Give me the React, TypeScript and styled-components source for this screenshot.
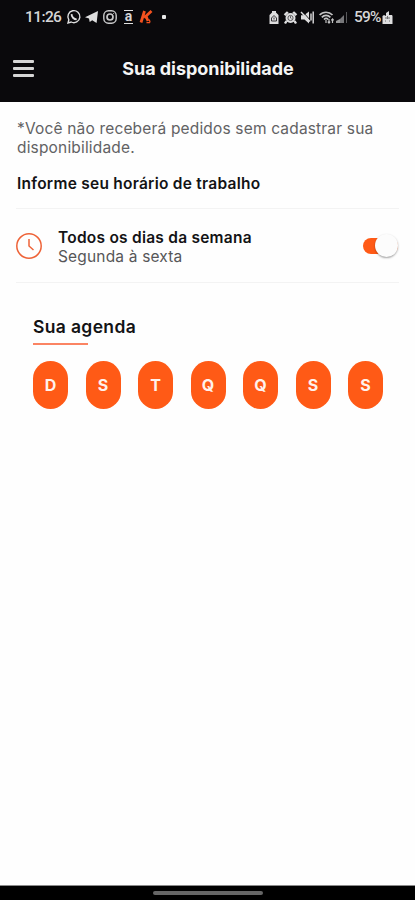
import React from "react";
import styled, { createGlobalStyle } from "styled-components";

const GlobalStyle = createGlobalStyle`
  * { box-sizing: border-box; }
  html, body { margin: 0; padding: 0; background: #fefefe; }
  body { overflow: hidden; }
`;

const Screen = styled.div`
  display: flex;
  flex-direction: column;
  width: 415px;
  height: 900px;
  background: #fefefe;
  font-family: Inter, "Liberation Sans", sans-serif;
  color: #131315;
`;

const TopArea = styled.div`
  flex: none;
  height: 102px;
  background: #0a090c;
`;

const StatusBar = styled.div`
  display: flex;
  align-items: center;
  justify-content: space-between;
  height: 34px;
  padding: 0 22px 0 25px;
  font-family: Roboto, sans-serif;
  color: #d6d6d7;
`;

const StatusGroup = styled.div`
  display: flex;
  align-items: center;
`;

const StatusText = styled.span<{ $width: number; $spacing: number; $gap?: number }>`
  width: ${(p) => p.$width}px;
  margin-left: ${(p) => p.$gap ?? 0}px;
  font-size: 15.5px;
  font-weight: 500;
  letter-spacing: ${(p) => p.$spacing}px;
  line-height: 20px;
  white-space: nowrap;
`;

const Glyph = styled.svg<{ $gap: number }>`
  display: block;
  flex: none;
  margin-left: ${(p) => p.$gap}px;
  overflow: visible;
`;

const StoreBadge = styled.span`
  display: flex;
  align-items: center;
  justify-content: center;
  width: 9px;
  height: 14px;
  margin-left: 7px;
  padding-bottom: 2px;
  border-top: 1.5px solid #dededf;
  border-bottom: 1.5px solid #dededf;
  font-size: 14px;
  font-weight: 700;
  line-height: 9px;
`;

const Dot = styled.span`
  width: 4px;
  height: 4px;
  margin-left: 9px;
  border-radius: 1px;
  background: #e8e8e8;
`;

const AppBar = styled.header`
  display: grid;
  grid-template-columns: 35px 1fr 35px;
  align-items: center;
  height: 68px;
  padding: 0 12px 0 13px;
`;

const MenuButton = styled.button`
  display: flex;
  flex-direction: column;
  gap: 4px;
  width: 21px;
  padding: 0;
  border: 0;
  background: none;
`;

const MenuLine = styled.span`
  height: 3px;
  border-radius: 1px;
  background: #d6d6d6;
`;

const Title = styled.h1`
  margin: 0;
  padding-top: 1px;
  font-size: 18px;
  font-weight: 700;
  line-height: 24px;
  letter-spacing: -0.05px;
  color: #f5f5f5;
  text-align: center;
  white-space: nowrap;
`;

const Content = styled.main`
  flex: 1;
  padding: 17px 16px 0;
`;

const Notice = styled.p`
  margin: 0 0 0 1px;
  font-size: 15.5px;
  line-height: 19px;
  letter-spacing: 0.17px;
  color: #626264;
  white-space: nowrap;
`;

const Prompt = styled.h2`
  margin: 17px 0 0 1px;
  font-size: 15.5px;
  font-weight: 600;
  line-height: 20px;
  letter-spacing: 0.25px;
  white-space: nowrap;
`;

const ScheduleRow = styled.section`
  display: flex;
  align-items: center;
  height: 75px;
  margin-top: 14px;
  border-top: 1px solid #f3f3f3;
  border-bottom: 1px solid #f3f3f3;
`;

const ScheduleText = styled.div`
  flex: 1;
  margin-left: 16px;
  padding-top: 3px;
`;

const ScheduleName = styled.div`
  font-size: 15.5px;
  font-weight: 600;
  line-height: 19px;
  letter-spacing: 0.24px;
`;

const ScheduleDays = styled.div`
  font-size: 15.5px;
  line-height: 20px;
  letter-spacing: 0.17px;
  color: #565658;
`;

const Toggle = styled.button`
  display: flex;
  align-items: center;
  justify-content: flex-end;
  width: 35px;
  height: 16px;
  margin-right: 1px;
  padding: 0;
  border: 0;
  border-radius: 8px;
  background: #ff5a16;
`;

const Knob = styled.span`
  flex: none;
  width: 23px;
  height: 23px;
  border-radius: 50%;
  background: #fcfcfc;
  box-shadow: 0 1px 2px rgba(0, 0, 0, 0.34);
`;

const Agenda = styled.section`
  padding: 33px 16px 0 17px;
`;

const AgendaTitle = styled.h2`
  width: 120px;
  margin: 0;
  font-size: 17.5px;
  font-weight: 600;
  line-height: 22px;
  letter-spacing: 0.35px;
  white-space: nowrap;
`;

const Underline = styled.div`
  width: 55px;
  height: 2px;
  margin-top: 5px;
  background: #fb8463;
`;

const Days = styled.div`
  display: flex;
  justify-content: space-between;
  margin-top: 16px;
`;

const Day = styled.button`
  width: 35px;
  height: 48px;
  padding: 0;
  border: 0;
  border-radius: 17.5px;
  background: #ff5a16;
  color: #fff2ec;
  font-family: inherit;
  font-size: 16px;
  font-weight: 700;
`;

const NavigationBar = styled.footer`
  flex: none;
  display: flex;
  justify-content: center;
  height: 15px;
  padding-top: 5px;
  border-top: 1px solid #8a8a8a;
  background: #000;
`;

const HomeHandle = styled.div`
  width: 110px;
  height: 4px;
  border-radius: 2px;
  background: #666;
`;

const ink = "#dededf";
const days = ["D", "S", "T", "Q", "Q", "S", "S"];

function Notifications() {
  return (
    <StatusGroup>
      <StatusText $width={42} $spacing={-0.6}>11:26</StatusText>
      <Glyph $gap={0} width="14" height="14" viewBox="0 0 14 14" fill="none" stroke={ink}>
        <path d="M1 13l.8-3.2A6 6 0 1 1 4.2 12z" strokeWidth="1.4" />
        <path d="M4.7 4.2c-.4 2.6 2.2 5.2 5 5.2" strokeWidth="1.9" />
      </Glyph>
      <Glyph $gap={4} width="13" height="12" viewBox="0 0 13 12">
        <path d="M0 6.2L13 0l-1.4 12-4.4-2.8L4.7 11 4 7.5z" fill={ink} />
      </Glyph>
      <Glyph $gap={5} width="14" height="14" viewBox="0 0 14 14" fill="none" stroke="#c9c9ca">
        <rect x=".8" y=".8" width="12.4" height="12.4" rx="4.6" strokeWidth="1.4" />
        <circle cx="7" cy="7" r="3" strokeWidth="1.7" />
        <circle cx="10.7" cy="3.4" r=".5" fill={ink} stroke="none" />
      </Glyph>
      <StoreBadge>a</StoreBadge>
      <Glyph $gap={7} width="13" height="14" viewBox="0 0 13 14" fill="none" stroke="#f4511e">
        <path d="M4.5 1L1 12.5M11.5 1L4.2 7.8M6 6l2 5" strokeWidth="2.8" />
        <path d="M6.5 12.7h3.5M9.3 9.5l.8 3" strokeWidth="1.2" />
      </Glyph>
      <Dot />
    </StatusGroup>
  );
}

function SystemIcons() {
  return (
    <StatusGroup>
      <Glyph $gap={0} width="10" height="13" viewBox="0 0 10 13">
        <path d="M3 0h4v1.5L9.5 4v9H.5V4L3 1.5z" fill={ink} />
        <path d="M5 4.5L2.5 7v3h5V7zM5 6.5v2" fill="none" stroke="#343336" />
      </Glyph>
      <Glyph $gap={5} width="13" height="13" viewBox="0 0 13 13" fill="none">
        <path d="M.6 4.2L3.8 1M12.4 4.2L9.2 1M2.5 10L1 12.5M10.5 10l1.5 2.5" stroke={ink} strokeWidth="2.4" />
        <circle cx="6.5" cy="7" r="5" fill={ink} />
        <circle cx="6.5" cy="7" r="2.6" stroke="#58575a" />
        <path d="M6.5 5.2V7l1 .8" stroke="#58575a" />
      </Glyph>
      <Glyph $gap={4} width="13" height="13" viewBox="0 0 13 13" fill="none">
        <path d="M0 4.2h3L8 .5v12L3.5 8.5H0z" fill={ink} />
        <path d="M1.5.5l8 9" stroke="#0a090c" />
        <path d="M0 1l9 9.5M10 2.5v7M12.2.5v12" stroke={ink} strokeWidth="1.4" />
      </Glyph>
      <Glyph $gap={5} width="16" height="13" viewBox="0 0 16 13" fill="none" stroke="#c4c4c5">
        <path d="M.6 4C4 .3 10 .3 13.5 4M2.8 6.3c2.5-2.6 6-2.6 8.6 0M5 8.5c1.2-1.2 3-1.2 4.3 0" strokeWidth="1.7" />
        <path d="M7 9v3M10 8v4M8.8 10.6L10 12l1.2-1.4M13.5 12V8M12.3 9.4L13.5 8l1.2 1.4" strokeWidth="1.2" />
      </Glyph>
      <Glyph $gap={1} width="13" height="12" viewBox="0 0 13 12">
        <path d="M0 12v-2l4-2v4z" fill="#99999b" />
        <path d="M4 12V8l4-4v8z" fill="#77777a" />
        <path d="M10.5 1v11" stroke="#59595c" />
      </Glyph>
      <StatusText $width={28} $spacing={-0.8} $gap={5}>59%</StatusText>
      <Glyph $gap={0} width="11" height="13" viewBox="0 0 11 13">
        <path d="M.5 5L2 4l2 1V2l3-2v4h3l.5 1v8H.5z" fill={ink} />
        <path d="M3 7h5M5.5 5v3M3 10h1M7 10h1" stroke="#6d6c6f" />
      </Glyph>
    </StatusGroup>
  );
}

export default function App() {
  return (
    <>
      <GlobalStyle />
      <Screen>
        <TopArea>
          <StatusBar>
            <Notifications />
            <SystemIcons />
          </StatusBar>
          <AppBar>
            <MenuButton aria-label="Menu">
              <MenuLine />
              <MenuLine />
              <MenuLine />
            </MenuButton>
            <Title>Sua disponibilidade</Title>
          </AppBar>
        </TopArea>
        <Content>
          <Notice>
            *Você não receberá pedidos sem cadastrar sua
            <br />
            disponibilidade.
          </Notice>
          <Prompt>Informe seu horário de trabalho</Prompt>
          <ScheduleRow>
            <Glyph $gap={0} width="26" height="26" viewBox="0 0 26 26" fill="none" stroke="#ee6338">
              <circle cx="13" cy="13" r="12.2" strokeWidth="1.5" />
              <path d="M13 6v7l4.5 4" strokeWidth="1.5" />
            </Glyph>
            <ScheduleText>
              <ScheduleName>Todos os dias da semana</ScheduleName>
              <ScheduleDays>Segunda à sexta</ScheduleDays>
            </ScheduleText>
            <Toggle role="switch" aria-checked="true" aria-label="Todos os dias da semana">
              <Knob />
            </Toggle>
          </ScheduleRow>
          <Agenda>
            <AgendaTitle>Sua agenda</AgendaTitle>
            <Underline />
            <Days>
              {days.map((day, index) => (
                <Day key={index}>{day}</Day>
              ))}
            </Days>
          </Agenda>
        </Content>
        <NavigationBar>
          <HomeHandle />
        </NavigationBar>
      </Screen>
    </>
  );
}
